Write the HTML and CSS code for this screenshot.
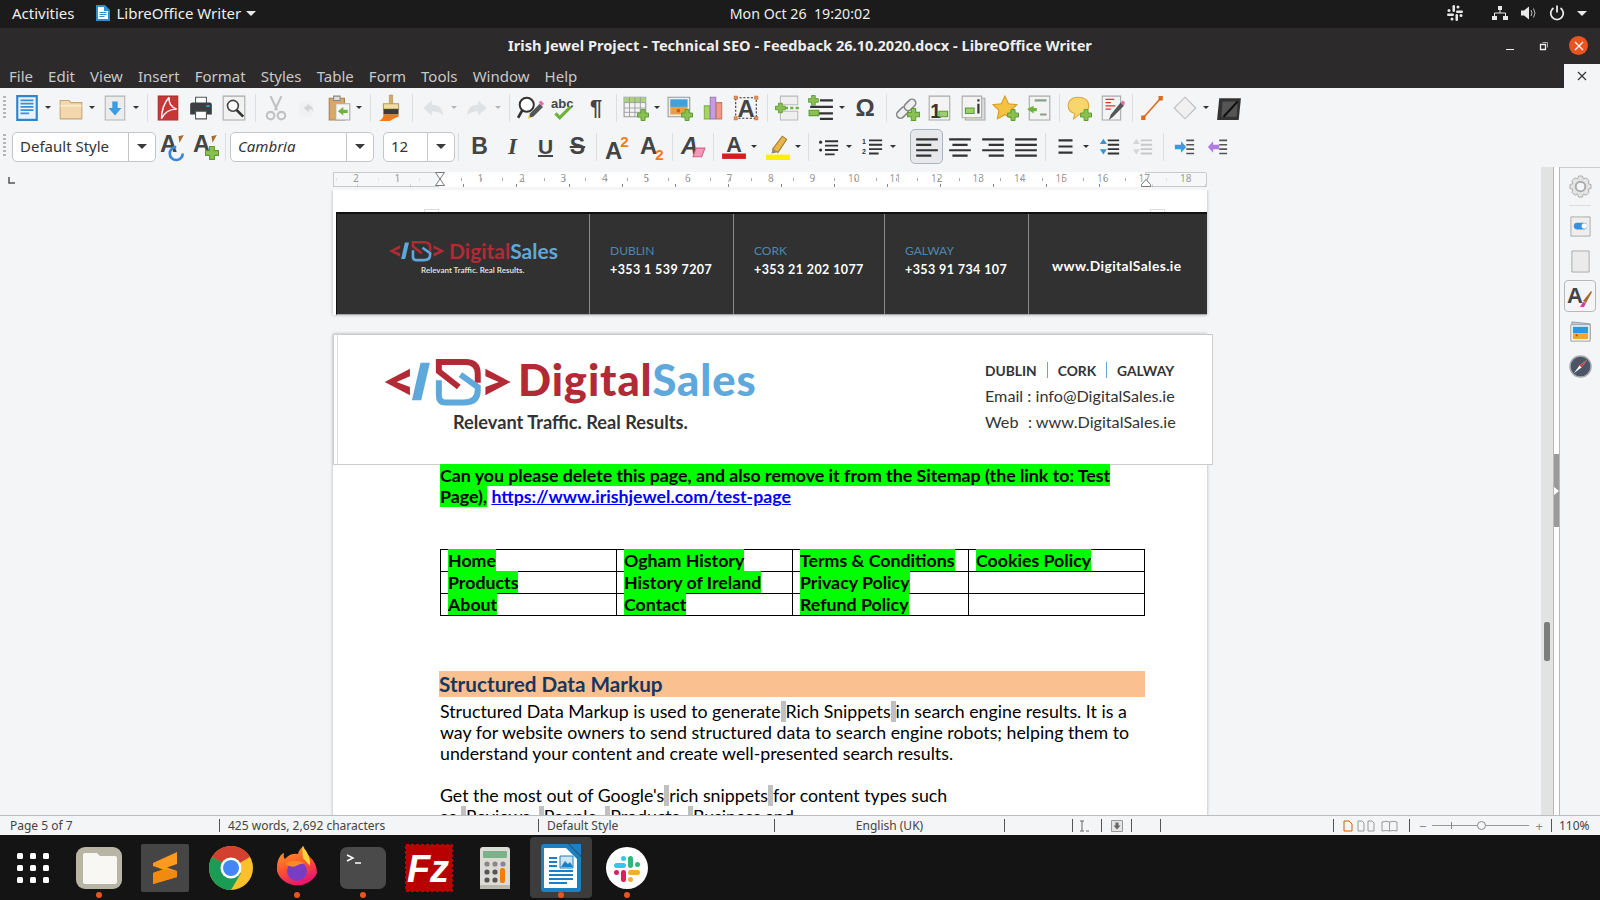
FILE: index.html
```html
<!DOCTYPE html>
<html lang="en">
<head>
<meta charset="utf-8">
<title>LibreOffice Writer</title>
<link rel="stylesheet" href="styles.css">
</head>
<body>
<svg class="defs" width="0" height="0">
  <defs>
    <symbol id="plus" viewBox="0 0 12 12"><path d="M4 .5h4v3.500h3.500v4H8v3.500H4V8H.5V4H4z" fill="#8cc152" stroke="#5d9c37"/></symbol>
    <symbol id="logo" viewBox="40 35 385 150">
      <path d="M118 70 42 110l76 40v-25l-40-15 40-17z" fill="#b22a36"/>
      <path d="M150 52h28l-26 113h-28z" fill="#5fa8dc"/>
      <path d="M265 125 205 78V50h80q37 0 37 35v27" fill="none" stroke="#b22a36" stroke-width="18"/>
      <path d="M205 105v45q0 22 20 22h55q42 0 42-37v-10l-52-37" fill="none" stroke="#5fa8dc" stroke-width="18"/>
      <path d="M345 70l76 40-76 40v-25l40-15-40-17z" fill="#b22a36"/>
    </symbol>
  </defs>
</svg>

<header class="topbar">
  <span class="tb-activities">Activities</span>
  <div class="tb-app">
    <svg class="tb-docicon" viewBox="0 0 14 16" width="14" height="16"><path d="M0 0h9l5 5v11H0z" fill="#2e8fd0"/><path d="M2 2h6v4h4v8H2z" fill="#fff"/><path d="M3.500 7.500h7M3.500 9.500h7M3.500 11.500h5" stroke="#2e8fd0"/></svg>
    <span>LibreOffice Writer</span>
    <i class="tri tri-white"></i>
  </div>
  <time class="tb-clock">Mon Oct 26&nbsp;&nbsp;19:20:02</time>
  <div class="tb-tray">
    <svg class="tray-slack" viewBox="0 0 16 16" width="16" height="16"><g fill="#e8e8e8"><rect x="5.500" y="0" width="2.500" height="7" rx="1.200"/><rect x="8.500" y="9" width="2.500" height="7" rx="1.200"/><rect x="0" y="8.500" width="7" height="2.500" rx="1.200"/><rect x="9" y="5.500" width="7" height="2.500" rx="1.200"/><circle cx="11" cy="2" r="1.500"/><circle cx="5" cy="14" r="1.500"/><circle cx="2" cy="5.500" r="1.500"/><circle cx="14" cy="10.500" r="1.500"/></g></svg>
    <svg class="tray-net" viewBox="0 0 16 14" width="16" height="14"><path d="M6 0h4v4H6zM0 10h5v4H0zM11 10h5v4h-5z" fill="#e8e8e8"/><path d="M8 4v3M2.500 10V7h11v3" stroke="#e8e8e8" fill="none"/></svg>
    <svg class="tray-vol" viewBox="0 0 16 14" width="16" height="14"><path d="M0 4.500h3l5-4v13l-5-4H0z" fill="#e8e8e8"/><path d="M10 4q2 3 0 6M12.500 2.500q3 4.500 0 9" stroke="#bbb" fill="none"/></svg>
    <svg class="tray-pow" viewBox="0 0 16 16" width="16" height="16"><path d="M4.500 3a6.300 6.300 0 1 0 7 0M8 .5v7" stroke="#e8e8e8" stroke-width="1.800" fill="none"/></svg>
    <i class="tri tri-white"></i>
  </div>
</header>

<div class="titlebar">
  <h1 class="title">Irish Jewel Project - Technical SEO - Feedback 26.10.2020.docx - LibreOffice Writer</h1>
  <div class="winbtns">
    <svg viewBox="0 0 10 10" width="10" height="10"><path d="M1 8.500h8" stroke="#eee"/></svg>
    <svg class="win-max" viewBox="0 0 10 10" width="10" height="10"><path d="M1.500 3.500h5v5h-5z" stroke="#eee" fill="none" stroke-width="1.300"/><path d="M3.500 1.500h5v5" stroke="#aaa" fill="none"/></svg>
    <span class="win-close"><svg viewBox="0 0 10 10" width="10" height="10"><path d="M1 1l8 8M9 1l-8 8" stroke="#fff" stroke-width="1.200"/></svg></span>
  </div>
</div>

<nav class="menubar">
  <ul class="menu">
    <li>File</li><li>Edit</li><li>View</li><li>Insert</li><li>Format</li><li>Styles</li><li>Table</li><li>Form</li><li>Tools</li><li>Window</li><li>Help</li>
  </ul>
  <span class="menu-close"><svg viewBox="0 0 10 10" width="10" height="10"><path d="M1 1l8 8M9 1l-8 8" stroke="#333" stroke-width="1.200"/></svg></span>
</nav>

<div class="toolbar tb1">
  <i class="grip"></i>
  <span class="ic"><svg viewBox="0 0 24 24"><path d="M3 1h18v22H3z" fill="#eaf3fb" stroke="#2f86cc" stroke-width="2"/><path d="M6 5h12M6 8h12M6 11h12M6 14h12M6 17h8" stroke="#3a90d4" stroke-width="1.500"/></svg></span><i class="dd"></i>
  <span class="ic"><svg viewBox="0 0 24 24"><path d="M2 5h8l2 2h10v15H2z" fill="#f3d8ad" stroke="#c8a576"/><path d="M2 10h20" stroke="#fff3dd"/></svg></span><i class="dd"></i>
  <span class="ic"><svg viewBox="0 0 24 24"><path d="M3 1h18v22H3z" fill="#ececec" stroke="#b5b5b5"/><path d="M9.500 6h5v6H18l-6 7-6-7h3.500z" fill="#3d9be0"/></svg></span><i class="dd"></i>
  <i class="sep"></i>
  <span class="ic"><svg viewBox="0 0 24 24"><path d="M3 1h18v22H3z" fill="#c93636" stroke="#a92a2a"/><path d="M13 2Q6 10 6 22M13 2q-1 8 7 11Q10 13 6 22" fill="none" stroke="#fff" stroke-width="1.300"/></svg></span>
  <span class="ic"><svg viewBox="0 0 24 24"><path d="M7 2h10v6H7z" fill="#fff" stroke="#555"/><path d="M2 9q0-2 2-2h16q2 0 2 2v9H2z" fill="#3c3f42"/><path d="M7 15h10v7H7z" fill="#fff" stroke="#555"/><path d="M17 9.500h3v1.500h-3z" fill="#2bb0e6"/></svg></span>
  <span class="ic"><svg viewBox="0 0 24 24"><path d="M2 1h20v22H2z" fill="#f2f2f2" stroke="#a9a9a9"/><circle cx="11" cy="10" r="5" fill="#fff" stroke="#444" stroke-width="1.500"/><path d="M14.500 14l6 6" stroke="#333" stroke-width="2.500"/></svg></span>
  <i class="sep"></i>
  <span class="ic"><svg viewBox="0 0 24 24" class="dim"><path d="M7 1l6 13M17 1l-6 13" stroke="#999" stroke-width="2"/><circle cx="7" cy="19" r="3.500" fill="none" stroke="#999" stroke-width="2"/><circle cx="17" cy="19" r="3.500" fill="none" stroke="#999" stroke-width="2"/></svg></span>
  <span class="ic ic-n"><svg viewBox="0 0 24 24" class="dim"><path d="M4 6h12v14H4z" fill="#eee"/><path d="M13 8 8 12l5 4v-3q3 0 4 3 0-6-4-6z" fill="#bbb"/></svg></span>
  <span class="ic ic-n"><svg viewBox="0 0 24 24"><path d="M3 3h14v20H3z" fill="#d9a868" stroke="#a6814e"/><path d="M7 1h6v4H7z" fill="#ddd" stroke="#888"/><path d="M9 8h13v15H9z" fill="#f5f5f5" stroke="#aaa"/><path d="M11 15l5-4v2.500h4v3h-4V19z" fill="#6fb33c"/></svg></span><i class="dd"></i>
  <i class="sep"></i>
  <span class="ic"><svg viewBox="0 0 24 24"><path d="M10.500 0h3v8h-3z" fill="#d9a868" stroke="#a6814e" stroke-width=".5"/><path d="M5 8h14v5H5z" fill="#f1dca9" stroke="#b79a5e"/><path d="M5 13h14v5H5z" fill="#3a3a3a"/><path d="M5 18h14v2q-6 2-8 4H1q4-2 4-6z" fill="#ee7a1e"/></svg></span>
  <i class="sep"></i>
  <span class="ic"><svg viewBox="0 0 24 24" class="dim"><path d="M11 5 3 12l8 7v-4q7 0 10 4 0-10-10-10z" fill="#cfd3d6"/></svg></span><i class="dd dd-dim"></i>
  <span class="ic"><svg viewBox="0 0 24 24" class="dim"><path d="M13 5l8 7-8 7v-4q-7 0-10 4 0-10 10-10z" fill="#cfd3d6"/></svg></span><i class="dd dd-dim"></i>
  <i class="sep"></i>
  <span class="ic"><svg viewBox="0 0 24 24"><circle cx="9" cy="9" r="6.500" fill="#fff" stroke="#333" stroke-width="1.800"/><path d="M5 14 1 21" stroke="#333" stroke-width="2.500"/><path d="M11 21l1-4 9-9 3 3-9 9z" fill="#555"/><path d="M20 7l2-2 3 3-2 2z" fill="#e86aa6"/><path d="M10 22l1-3 2 2z" fill="#f4c430"/></svg></span>
  <span class="ic"><svg viewBox="0 0 24 24"><text x="1" y="12" class="ico-abc">abc</text><path d="M5 17l4 4 10-10" fill="none" stroke="#6fb33c" stroke-width="3"/></svg></span>
  <span class="ic"><span class="glyph pil">¶</span></span>
  <i class="sep sep7"></i>
  <span class="ic"><svg viewBox="0 0 24 24"><path d="M1 2h20v18H1z" fill="#f3f3f3" stroke="#999"/><path d="M1 2h20v5H1z" fill="#a9cf7f"/><path d="M1 7h20M1 12h20M1 16h20M6 2v18M11 2v18M16 2v18" stroke="#999" stroke-width=".8"/><use href="#plus" x="13" y="13" width="11" height="11"/></svg></span><i class="dd"></i>
  <span class="ic"><svg viewBox="0 0 24 24"><path d="M1 2h20v18H1z" fill="#eee" stroke="#999"/><path d="M3 4h16v7H3z" fill="#3ea0dc"/><path d="M3 11h16v7H3z" fill="#e9a23b"/><path d="M9 13h3v3H9z" fill="#d0562f"/><use href="#plus" x="13" y="13" width="11" height="11"/></svg></span>
  <span class="ic"><svg viewBox="0 0 24 24"><path d="M4 10h5v12H4z" fill="#a6d46a" stroke="#84b14c"/><path d="M9.500 2h5v20h-5z" fill="#c79be0" stroke="#9f79bb"/><path d="M15 7h5v15h-5z" fill="#ef9a84" stroke="#c87863"/></svg></span>
  <span class="ic"><svg viewBox="0 0 24 24"><path d="M2.500 2.500h19v19h-19z" fill="none" stroke="#333" stroke-dasharray="2 1.500"/><text x="12" y="20" class="ico-a">A</text><path d="M1 1h3v3H1zM20 1h3v3h-3zM1 20h3v3H1zM20 20h3v3h-3z" fill="#f0935a" stroke="#b7602a" stroke-width=".5"/></svg></span>
  <i class="sep"></i>
  <span class="ic"><svg viewBox="0 0 24 24"><path d="M5 1h16v8H5zM5 15h16v8H5z" fill="#efefef" stroke="#bbb"/><path d="M9 12h3M14 12h3M19 12h3" stroke="#6fb33c" stroke-width="2.500"/><use href="#plus" x="0" y="7" width="10" height="10"/></svg></span>
  <span class="ic"><svg viewBox="0 0 24 24"><path d="M11 5h12M2 11h21M2 17h21M11 22h12" stroke="#333" stroke-width="2"/><use href="#plus" x="0" y="0" width="10" height="10"/><path d="M1 14h9v5H1z" fill="#8cc152" stroke="#5d9c37"/></svg></span><i class="dd"></i>
  <span class="ic"><span class="glyph omega">Ω</span></span>
  <i class="sep"></i>
  <span class="ic"><svg viewBox="0 0 24 24"><g transform="rotate(-45 12 12)" fill="#efefef" stroke="#888" stroke-width="1.500"><rect x="0" y="8.500" width="12" height="7" rx="3.500"/><rect x="10" y="8.500" width="12" height="7" rx="3.500"/></g><use href="#plus" x="12" y="12" width="12" height="12"/></svg></span>
  <span class="ic"><svg viewBox="0 0 24 24"><path d="M2 1h19v22H2z" fill="#f3f3f3" stroke="#aaa"/><text x="3" y="21" class="ico-one">1</text><path d="M11 15h8v5h-8z" fill="#9ccf6a" stroke="#5d9c37"/></svg></span>
  <span class="ic"><svg viewBox="0 0 24 24"><path d="M5 3h18v20H5z" fill="#ddd" stroke="#aaa"/><path d="M2 1h18v20H2z" fill="#f3f3f3" stroke="#aaa"/><path d="M5 12h8v5H5z" fill="#9ccf6a" stroke="#5d9c37"/><path d="M16 4h2v2h-2zM16 8h2v9h-2z" fill="#333"/></svg></span>
  <span class="ic"><svg viewBox="0 0 24 24"><path d="M11 1l3.300 7 7.700 1-5.600 5.200L18 22l-7-3.800L4 22l1.500-7.800L0 9l7.700-1z" fill="#f5c33f" stroke="#d69c25"/><use href="#plus" x="13" y="13" width="11" height="11"/></svg></span>
  <span class="ic"><svg viewBox="0 0 24 24"><path d="M3 1h19v22H3z" fill="#f3f3f3" stroke="#aaa"/><path d="M8 4h11v2H8zM13 17h6v2h-6z" fill="#8aa08a"/><path d="M1 13l6-3v2h3v3H7v2z" fill="#6fb33c"/></svg></span>
  <i class="sep sep7"></i>
  <span class="ic"><svg viewBox="0 0 24 24"><path d="M11 2c6 0 10 3 10 8s-4 8-9 8l-5 4 1-5c-4-1-6-4-6-7 0-5 4-8 9-8z" fill="#f9d66b" stroke="#e0a93a"/><use href="#plus" x="13" y="13" width="11" height="11"/></svg></span>
  <span class="ic"><svg viewBox="0 0 24 24"><path d="M3 1h17v22H3z" fill="#f3f3f3" stroke="#aaa"/><path d="M6 4h8M6 7h5M6 10h9M6 13h5" stroke="#d33" stroke-width="1.300"/><path d="M9 23l2-5 9-11 3 3-10 10z" fill="#555"/><path d="M20 7l2-2 2 2-1 3z" fill="#e86aa6"/></svg></span>
  <i class="sep sep7"></i>
  <span class="ic"><svg viewBox="0 0 24 24"><path d="M4 21 20 3" stroke="#dd6b1e" stroke-width="1.500"/><path d="M2 19h4v4H2zM18 1h4v4h-4z" fill="#dd6b1e"/></svg></span>
  <span class="ic"><svg viewBox="0 0 24 24"><path d="M12 2l10 10-10 10L2 12z" fill="#f0f0f0" stroke="#bdbdbd"/></svg></span><i class="dd"></i>
  <span class="ic"><svg viewBox="0 0 24 24"><path d="M3 3h20l-2 20H1z" fill="#333"/><path d="M6 6h14l-1 14H5z" fill="#555"/><path d="M7 20 20 6" stroke="#111" stroke-width="2"/></svg></span>
</div>

<div class="toolbar tb2">
  <i class="grip"></i>
  <div class="combo combo-style"><span class="combo-text">Default Style</span><span class="combo-btn"><i class="tri tri-dark"></i></span></div>
  <span class="ic"><svg viewBox="0 0 24 24"><text x="0" y="17" class="ico-bigA">A</text><path d="M15 12a6 6 0 1 0 6 6" fill="none" stroke="#3a86d8" stroke-width="2.500"/><path d="M17 2l5-1-4 7z" fill="#a96a2a"/></svg></span>
  <span class="ic"><svg viewBox="0 0 24 24"><text x="0" y="17" class="ico-bigA">A</text><use href="#plus" x="11" y="11" width="13" height="13"/><path d="M17 2l5-1-4 7z" fill="#a96a2a"/></svg></span>
  <i class="sep sep8"></i>
  <div class="combo combo-font"><span class="combo-text italic">Cambria</span><span class="combo-btn"><i class="tri tri-dark"></i></span></div>
  <div class="combo combo-size"><span class="combo-text">12</span><span class="combo-btn"><i class="tri tri-dark"></i></span></div>
  <i class="sep sep8"></i>
  <span class="ic"><span class="glyph fmt fmt-b">B</span></span>
  <span class="ic"><span class="glyph fmt fmt-i">I</span></span>
  <span class="ic"><span class="glyph fmt fmt-u">U</span></span>
  <span class="ic ic-n"><span class="glyph fmt fmt-s">S</span></span>
  <i class="sep sep7"></i>
  <span class="ic ic-w"><svg viewBox="0 0 24 24"><text x="0" y="23" class="ico-bigA">A</text><text x="14" y="12" class="ico-sup">2</text></svg></span>
  <span class="ic"><svg viewBox="0 0 24 24"><text x="0" y="18" class="ico-bigA">A</text><text x="14" y="24" class="ico-sup">2</text></svg></span>
  <i class="sep sep7"></i>
  <span class="ic ic-w2"><svg viewBox="0 0 24 24"><text x="1" y="18" class="ico-bigA italic">A</text><path d="M12 21l3-8h8l-3 8z" fill="#f49ab8" stroke="#d5608a"/></svg></span>
  <i class="sep sep7"></i>
  <span class="ic"><svg viewBox="0 0 24 24"><text x="12" y="17" class="ico-a ico-a2">A</text><path d="M1 18h22v5H1z" fill="#cf1f1f"/></svg></span><i class="dd"></i>
  <span class="ic"><svg viewBox="0 0 24 24"><path d="M7 14 16 2l4 3-8 12z" fill="#e8b64a" stroke="#a57f29"/><path d="M7 14l4 3-5 1z" fill="#888"/><path d="M1 19h22v5H1z" fill="#ffee00"/></svg></span><i class="dd"></i>
  <i class="sep sep7"></i>
  <span class="ic ic-sm"><svg viewBox="0 0 24 24"><path d="M8 6h15M8 11h15M8 16h15M8 21h11" stroke="#333" stroke-width="2.200"/><circle cx="3" cy="7" r="1.800" fill="#333"/><circle cx="3" cy="16" r="1.800" fill="#333"/></svg></span><i class="dd"></i>
  <span class="ic ic-sm"><svg viewBox="0 0 24 24"><path d="M8 5h15M8 10h15M8 15h15M8 20h11" stroke="#333" stroke-width="2.200"/><text x="0" y="9" class="ico-num">1</text><text x="0" y="20" class="ico-num">2</text></svg></span><i class="dd"></i>
  <i class="sep sep-a"></i>
  <span class="ic ic-act"><svg viewBox="0 0 24 24"><path d="M2 5h20M2 10h14M2 15h20M2 20h14" stroke="#333" stroke-width="2"/></svg></span>
  <span class="ic"><svg viewBox="0 0 24 24"><path d="M2 5h20M5 10h14M2 15h20M5 20h14" stroke="#333" stroke-width="2"/></svg></span>
  <span class="ic"><svg viewBox="0 0 24 24"><path d="M2 5h20M8 10h14M2 15h20M8 20h14" stroke="#333" stroke-width="2"/></svg></span>
  <span class="ic"><svg viewBox="0 0 24 24"><path d="M2 5h20M2 10h20M2 15h20M2 20h20" stroke="#333" stroke-width="2"/></svg></span>
  <i class="sep sep7"></i>
  <span class="ic ic-sm"><svg viewBox="0 0 24 24"><path d="M4 5h16M4 12h16M4 19h16" stroke="#333" stroke-width="2.500"/></svg></span><i class="dd"></i>
  <span class="ic ic-sm"><svg viewBox="0 0 24 24"><path d="M10 5h13M10 10h13M10 15h13M10 20h13" stroke="#333" stroke-width="2.200"/><path d="M5 3l4 6H1zM1 15h8l-4 6z" fill="#3a90d4"/></svg></span>
  <span class="ic ic-sm"><svg viewBox="0 0 24 24"><path d="M10 5h13M10 10h13M10 15h13M10 20h13" stroke="#c8c8c8" stroke-width="2.200"/><path d="M5 3l4 6H1zM1 15h8l-4 6z" fill="#d6d6d6"/></svg></span>
  <i class="sep"></i>
  <span class="ic ic-sm"><svg viewBox="0 0 24 24"><path d="M14 5h9M14 10h9M14 15h9M14 20h9" stroke="#555" stroke-width="1.800"/><path d="M8 6l6 6.500L8 19v-4H1v-5h7z" fill="#3a9be0"/></svg></span>
  <span class="ic ic-sm"><svg viewBox="0 0 24 24"><path d="M14 5h9M14 10h9M14 15h9M14 20h9" stroke="#555" stroke-width="1.800"/><path d="M7 6l-6 6.500L7 19v-4h7v-5H7z" fill="#b07be0"/></svg></span>
</div>

<main class="workspace">
  <div class="docpane">
    <div class="rulerrow">
      <svg class="tabmark" viewBox="0 0 7 7" width="7" height="7"><path d="M1 0v6h6" fill="none" stroke="#555" stroke-width="1.500"/></svg>
      <div class="ruler">
        <span class="r-grey r-grey-l"></span>
        <span class="r-grey r-grey-r"></span>
        <div class="r-nums">
          <span>2</span><span>1</span><span></span><span>1</span><span>2</span><span>3</span><span>4</span><span>5</span><span>6</span><span>7</span><span>8</span><span>9</span><span>10</span><span>11</span><span>12</span><span>13</span><span>14</span><span>15</span><span>16</span><span>17</span><span>18</span>
        </div>
        <svg class="r-indent r-indent-l" viewBox="0 0 10 14" width="10" height="14"><path d="M.5.500h9L5 7l4.500 6.500h-9L5 7z" fill="#fff" stroke="#777"/></svg>
        <svg class="r-indent r-indent-r" viewBox="0 0 10 8" width="10" height="8"><path d="M5 .5l4.500 5v2h-9v-2z" fill="#fff" stroke="#777"/></svg>
      </div>
    </div>
    <div class="docview">
      <div class="page page-prev">
        <div class="cropmarks"><i></i><i></i></div>
        <div class="band">
          <div class="band-cell band-brand">
            <div class="band-logo"><svg class="band-mark" viewBox="0 0 385 150"><use href="#logo"/></svg><span class="band-word"><b class="w-red">Digital</b><b class="w-blue">Sales</b></span></div>
            <div class="band-tag">Relevant Traffic. Real Results.</div>
          </div>
          <div class="band-cell band-city c1"><span class="city">DUBLIN</span><strong>+353 1 539 7207</strong></div>
          <div class="band-cell band-city c2"><span class="city">CORK</span><strong>+353 21 202 1077</strong></div>
          <div class="band-cell band-city c3"><span class="city">GALWAY</span><strong>+353 91 734 107</strong></div>
          <div class="band-cell band-web"><strong>www.DigitalSales.ie</strong></div>
        </div>
      </div>
      <div class="page page-cur">
        <div class="headbox">
          <div class="hb-left">
            <div class="hb-logo"><svg class="hb-mark" viewBox="0 0 385 150"><use href="#logo"/></svg><span class="hb-word"><b class="w-red">Digital</b><b class="w-blue">Sales</b></span></div>
            <div class="hb-tag">Relevant Traffic. Real Results.</div>
          </div>
          <div class="hb-right">
            <div class="hb-cities"><b>DUBLIN</b><i></i><b>CORK</b><i></i><b>GALWAY</b></div>
            <div class="hb-line">Email : info@DigitalSales.ie</div>
            <div class="hb-line"><span class="hb-lab">Web</span>: www.DigitalSales.ie</div>
          </div>
        </div>
        <div class="body">
          <p class="note"><mark>Can you please delete this page, and also remove it from the Sitemap (the link to: Test Page),</mark> <a href="#">https://www.irishjewel.com/test-page</a></p>
          <table class="links">
            <tr><td><mark>Home</mark></td><td><mark>Ogham History</mark></td><td><mark>Terms &amp; Conditions</mark></td><td><mark>Cookies Policy</mark></td></tr>
            <tr><td><mark>Products</mark></td><td><mark>History of Ireland</mark></td><td><mark>Privacy Policy</mark></td><td></td></tr>
            <tr><td><mark>About</mark></td><td><mark>Contact</mark></td><td><mark>Refund Policy</mark></td><td></td></tr>
          </table>
          <h2 class="sect">Structured Data Markup</h2>
          <p class="para">Structured Data Markup is used to generate<i class="fld"></i>Rich Snippets<i class="fld"></i>in search engine results. It is a way for website owners to send structured data to search engine robots; helping them to understand your content and create well-presented search results.</p>
          <p class="para para-2">Get the most out of Google's<i class="fld"></i>rich snippets<i class="fld"></i>for content types such<br>as <i class="fld"></i>Reviews, <i class="fld"></i>People, <i class="fld"></i>Products, <i class="fld"></i>Business and</p>
        </div>
      </div>
    </div>
  </div>
  <div class="vscroll"><span class="thumb"></span></div>
  <div class="sash"><span class="sash-handle"><i></i></span></div>
  <aside class="sidebar">
    <span class="sb-ic"><svg viewBox="0 0 24 24"><path d="M10 0h4l1 3 3-1 3 3-1 3 3 1v4l-3 1 1 3-3 3-3-1-1 3h-4l-1-3-3 1-3-3 1-3-3-1V9l3-1-1-3 3-3 3 1z" fill="#e4e4e4" stroke="#aaa"/><circle cx="12" cy="11" r="5" fill="#f4f5f7" stroke="#aaa" stroke-width="2"/></svg></span>
    <i class="sb-div"></i>
    <span class="sb-ic"><svg viewBox="0 0 24 24"><path d="M2 2h20v20H2z" fill="#eee" stroke="#aaa"/><rect x="5" y="8" width="14" height="7" rx="3.500" fill="#3a90e0"/><circle cx="16" cy="11.500" r="2.800" fill="#fff"/></svg></span>
    <span class="sb-ic"><svg viewBox="0 0 24 24"><path d="M3 1h18v22H3z" fill="#ebebeb" stroke="#aaa"/></svg></span>
    <span class="sb-ic sb-act"><svg viewBox="0 0 24 24"><text x="-1" y="19" class="ico-bigA">A</text><path d="M15 17 23 7l1 1-6 11z" fill="#a96a2a"/><path d="M12 23l3-5 3 1-2 4z" fill="#d63ca6"/></svg></span>
    <span class="sb-ic"><svg viewBox="0 0 24 24"><path d="M3 2l19 2v16L3 21z" fill="#bcd" stroke="#99a"/><path d="M2 5h20v17H2z" fill="#fff" stroke="#999"/><path d="M4 7h16v7H4z" fill="#2e97dd"/><path d="M4 14h16v6H4z" fill="#eda739"/><path d="M7 15h2v2H7z" fill="#d0402a"/></svg></span>
    <span class="sb-ic"><svg viewBox="0 0 24 24"><circle cx="12" cy="12" r="11" fill="#4a5568" stroke="#aaa" stroke-width="1.500"/><path d="M19 5 13 13 5 19l6-8z" fill="#fff"/><path d="M19 5l-6 8-2-2z" fill="#d33"/></svg></span>
  </aside>
</main>

<footer class="statusbar">
  <span class="st st-page">Page 5 of 7</span>
  <span class="st st-words">425 words, 2,692 characters</span>
  <span class="st st-style">Default Style</span>
  <span class="st st-lang">English (UK)</span>
  <span class="st st-a"></span>
  <span class="st st-ins"><svg viewBox="0 0 12 12" width="12" height="12"><path d="M2 1h4M4 1v10M2 11h4M8 11h3" stroke="#666" fill="none"/></svg></span>
  <span class="st st-save"><svg viewBox="0 0 12 12" width="12" height="12"><path d="M.5.500h11v11H.5z" fill="#e4e4e4" stroke="#999"/><path d="M4.500 2.500h3v3h2l-3.500 4-3.500-4h2z" fill="#666"/></svg></span>
  <span class="st st-b"></span>
  <span class="st st-c"></span>
  <span class="st st-views">
    <svg viewBox="0 0 10 12" width="10" height="12"><path d="M1 1h5l3 3v7H1z" fill="none" stroke="#d65c00"/></svg>
    <svg viewBox="0 0 20 12" width="20" height="12"><path d="M1 1h4l2 2v8H1zM11 1h4l2 2v8h-6z" fill="none" stroke="#999"/></svg>
    <svg viewBox="0 0 17 12" width="17" height="12"><path d="M8.500 2Q5 .5 1 2v9q4-1 7.500 0 3.500-1 7.500 0V2Q12 .5 8.500 2v9" fill="none" stroke="#999"/></svg>
  </span>
  <span class="st st-zoom">
    <i class="z-sign">−</i>
    <span class="z-track"><i class="z-mid"></i><i class="z-knob"></i></span>
    <i class="z-sign">+</i>
  </span>
  <span class="st st-pct">110%</span>
</footer>

<nav class="dock">
  <span class="d-app d-grid"><svg viewBox="0 0 32 30" width="32" height="30"><g fill="#fff"><rect x="0" y="0" width="6" height="6" rx="1.500"/><rect x="13" y="0" width="6" height="6" rx="1.500"/><rect x="26" y="0" width="6" height="6" rx="1.500"/><rect x="0" y="12" width="6" height="6" rx="1.500"/><rect x="13" y="12" width="6" height="6" rx="1.500"/><rect x="26" y="12" width="6" height="6" rx="1.500"/><rect x="0" y="24" width="6" height="6" rx="1.500"/><rect x="13" y="24" width="6" height="6" rx="1.500"/><rect x="26" y="24" width="6" height="6" rx="1.500"/></g></svg></span>
  <span class="d-app on"><svg viewBox="0 0 46 42" width="46" height="42"><rect width="46" height="42" rx="9" fill="#b9b5a4"/><path d="M7 8q0-2 2-2h12l3 3h15q2 0 2 2v24q0 2-2 2H9q-2 0-2-2z" fill="#f8f7f4"/></svg></span>
  <span class="d-app"><svg viewBox="0 0 48 48" width="48" height="48"><rect width="48" height="48" rx="2" fill="#454545"/><path d="M36 8V20L26 23.500 36 27V33L12 40V29L22 25.500 12 22V19z" fill="#ff9a1f"/><path d="M12 29l10-3.500 14 1.500v6L12 40z" fill="#f28a10"/></svg></span>
  <span class="d-app"><svg viewBox="0 0 44 44" width="44" height="44"><circle cx="22" cy="22" r="22" fill="#fbc02d"/><path d="M22 22 3 11A22 22 0 0 1 41 11z" fill="#d3402f"/><path d="M3 11A22 22 0 0 0 22 44L32 27z" fill="#1b9c55"/><circle cx="22" cy="22" r="10.500" fill="#fff"/><circle cx="22" cy="22" r="8" fill="#4287f5"/></svg></span>
  <span class="d-app on"><svg viewBox="0 0 44 44" width="44" height="44"><defs><linearGradient id="ff" x1="0" y1="0" x2=".4" y2="1"><stop offset="0" stop-color="#ffb02a"/><stop offset=".55" stop-color="#ff5a2a"/><stop offset="1" stop-color="#e8196a"/></linearGradient></defs><path d="M2 22C2 13 6 8 9 7q-1 4 1 6 5-6 13-5 1-5 6-8 0 6 5 10 8 7 8 17A21 19 0 0 1 2 25z" fill="url(#ff)"/><path d="M27 0q9 9 8 20l-7-8z" fill="#ffd23a"/><circle cx="22" cy="25" r="10" fill="#7a3cc4"/><path d="M10 18q8-6 20-1-6 1-9 3-4 2-11-2z" fill="#ff8a1f"/></svg></span>
  <span class="d-app on"><svg viewBox="0 0 46 42" width="46" height="42"><rect width="46" height="42" rx="7" fill="#4a4a4a"/><path d="M7 8l6 3-6 3" fill="none" stroke="#fff" stroke-width="1.500"/><path d="M15 16h6" stroke="#fff" stroke-width="1.500"/></svg></span>
  <span class="d-app"><svg viewBox="0 0 48 48" width="48" height="48"><rect x="1" y="1" width="46" height="46" fill="#b80000" stroke="#b80000" stroke-width="2" stroke-dasharray="3 2"/><rect x="4" y="4" width="40" height="40" fill="#b80000"/><text x="23" y="38" class="fz">Fz</text></svg></span>
  <span class="d-app"><svg viewBox="0 0 30 42" width="30" height="42"><rect width="30" height="42" rx="3" fill="#dcdcd4"/><rect y="38" width="30" height="4" fill="#b8b8b0"/><rect x="3" y="4" width="24" height="7" rx="1" fill="#7cb28b"/><g fill="#888"><circle cx="7" cy="17" r="2.600"/><circle cx="15" cy="17" r="2.600"/><circle cx="23" cy="17" r="2.600"/></g><g fill="#555"><circle cx="7" cy="25" r="2.600"/><circle cx="15" cy="25" r="2.600"/><circle cx="7" cy="33" r="2.600"/><circle cx="15" cy="33" r="2.600"/></g><rect x="20" y="21" width="5" height="15" rx="2" fill="#f57c00"/></svg></span>
  <span class="d-app d-active on"><svg viewBox="0 0 40 48" width="40" height="48"><path d="M0 3q0-3 3-3h24l13 13v32q0 3-3 3H3q-3 0-3-3z" fill="#1b80c4"/><path d="M3 4h22l11 11v29H3z" fill="#fff"/><path d="M28 0h12v12z" fill="#1b80c4"/><path d="M8 14h8M8 18h8M8 22h8M8 27h24M8 31h24M8 35h24M8 39h18" stroke="#1b80c4" stroke-width="1.800"/><path d="M19 12h13v12H19z" fill="#cfe5f4" stroke="#1b80c4"/><path d="M20 23l4-6 3 3 2-2 3 5z" fill="#1b80c4"/></svg></span>
  <span class="d-app on"><svg viewBox="0 0 42 42" width="42" height="42"><circle cx="21" cy="21" r="21" fill="#fff"/><rect x="22" y="9" width="5" height="12" rx="2.500" fill="#2eb67d"/><rect x="29" y="15" width="5" height="5" rx="2.500" fill="#2eb67d"/><rect x="8" y="16" width="12" height="5" rx="2.500" fill="#36c5f0"/><rect x="15" y="9" width="5" height="5" rx="2.500" fill="#36c5f0"/><rect x="15" y="23" width="5" height="12" rx="2.500" fill="#e01e5a"/><rect x="8" y="23" width="5" height="5" rx="2.500" fill="#e01e5a"/><rect x="22" y="23" width="12" height="5" rx="2.500" fill="#ecb22e"/><rect x="22" y="30" width="5" height="5" rx="2.500" fill="#ecb22e"/></svg></span>
</nav>
</body>
</html>
```

FILE: styles.css
```css
* { box-sizing: border-box; }
html, body { margin: 0; padding: 0; }
body {
  width: 1600px; height: 900px; overflow: hidden;
  display: flex; flex-direction: column;
  font-family: "Noto Sans", sans-serif; color: #333; background: #f4f5f7;
}
.defs { position: absolute; }
i { font-style: normal; display: block; }

/* GNOME top bar */
.topbar {
  height: 28px; flex: none; background: #1b1b1b; color: #eee;
  display: flex; align-items: center; font-size: 15px; position: relative; padding-bottom: 2px;
}
.tb-activities { margin-left: 12px; }
.tb-app { display: flex; align-items: center; margin-left: 21px; }
.tb-docicon { margin-right: 7px; }
.tb-app .tri { margin-left: 5px; }
.tb-clock { position: absolute; left: 0; right: 0; text-align: center; font-size: 14.200px; }
.tb-tray { margin-left: auto; display: flex; align-items: center; }
.tray-slack { margin-right: 29px; }
.tray-net { margin-right: 13px; }
.tray-vol { margin-right: 12px; }
.tray-pow { margin-right: 12px; }
.tb-tray .tri { margin-right: 13px; }

.tri { width: 0; height: 0; border-style: solid; border-width: 5px 5px 0; border-color: transparent; flex: none; }
.tri-white { border-top-color: #e8e8e8; border-width: 5px 5px 0; }
.tri-dark { border-top-color: #3a3a3a; }

/* Window title */
.titlebar {
  height: 36px; flex: none; background: #2c2a2b; position: relative; padding-bottom: 2px;
  display: flex; align-items: center; justify-content: center;
}
.title { margin: 0; font-size: 14.600px; font-weight: 700; color: #eee; }
.winbtns { position: absolute; right: 12px; top: 8px; display: flex; align-items: center; }
.winbtns svg { flex: none; }
.win-max { margin-left: 24px; margin-right: 20px; }
.win-close { width: 19px; height: 19px; border-radius: 50%; background: #e9541f; display: flex; align-items: center; justify-content: center; }

/* Menu */
.menubar { height: 24px; flex: none; background: #2c2a2b; display: flex; align-items: center; justify-content: space-between; }
.menu { list-style: none; margin: 0 0 0 9px; padding: 0; display: flex; gap: 15.100px; font-size: 15px; color: #c8c8c8; }
.menu-close { width: 36px; height: 24px; background: #f4f5f7; display: flex; align-items: center; justify-content: center; }

/* Toolbars */
.toolbar { display: flex; align-items: center; flex: none; background: #f4f5f7; position: relative; }
.tb1 { height: 38px; padding: 2px 0 0 10.500px; }
.tb2 { height: 41px; padding-left: 12px; }
.grip {
  position: absolute; left: 3px; top: 8px; width: 3px; height: 24px;
  background: repeating-linear-gradient(#b5b5b5 0 2px, transparent 2px 4px);
}
.ic { width: 33px; height: 30px; flex: none; display: flex; align-items: center; justify-content: center; }
.ic-n { width: 31px; }
.ic-w { width: 36px; }
.ic-w2 { width: 34px; }
.ic svg { width: 26px; height: 26px; overflow: visible; }
.ic-sm svg { width: 21px; height: 21px; }
.dim { opacity: .55; }
.dd { width: 11px; height: 10px; flex: none; position: relative; }
.dd::after { content: ""; position: absolute; left: 1px; top: 3px; border: solid transparent; border-width: 3px 3px 0; border-top-color: #333; }
.dd-dim::after { border-top-color: #b5b5b5; }
.sep { width: 9px; height: 28px; flex: none; position: relative; }
.sep::after { content: ""; position: absolute; left: 4px; top: 0; width: 1px; height: 100%; background: #dcdee0; }
.sep7 { width: 7px; }
.sep7::after { left: 3px; }
.sep8 { width: 8px; }
.sep8::after { left: 3px; }
.sep-a { width: 10px; }
.sep-a::after { display: none; }
.ic-act { border: 1px solid #aab4c2; border-radius: 5px; background: #e6e8eb; height: 35px; }

.glyph { font-family: "Liberation Sans", sans-serif; font-weight: 700; color: #444; line-height: 1; }
.pil { font-size: 22px; }
.omega { font-size: 24px; }
.fmt { font-size: 23px; }
.fmt-i { font-style: italic; font-family: "Liberation Serif", serif; }
.fmt-u { text-decoration: underline; text-decoration-thickness: 2px; font-size: 21px; }
.fmt-s { text-decoration: line-through; text-decoration-thickness: 2px; }

svg text { font-family: "Liberation Sans", sans-serif; font-weight: 700; }
.ico-abc { font-size: 12px; fill: #444; }
.ico-a { font-size: 22px; fill: #444; text-anchor: middle; }
.ico-a2 { font-size: 20px; }
.ico-one { font-size: 18px; fill: #333; }
.ico-bigA { font-size: 22px; fill: #444; }
.ico-sup { font-size: 14px; fill: #ef7d14; }
.ico-num { font-size: 8px; fill: #333; }
.italic { font-style: italic; }

.combo {
  height: 30px; flex: none; background: #fff; border: 1px solid #c4c6c9; border-radius: 5px;
  display: flex; align-items: center; font-size: 15px; color: #333;
}
.combo-text { flex: 1; padding: 0 0 2px 7px; }
.combo-btn { height: 100%; border-left: 1px solid #c4c6c9; display: flex; align-items: center; justify-content: center; }
.combo-style { width: 144px; }
.combo-style .combo-btn { width: 27px; }
.combo-font { width: 144px; }
.combo-font .combo-btn { width: 27px; }
.combo-size { width: 72px; margin-left: 9px; }
.combo-size .combo-btn { width: 27px; }

/* Workspace */
.workspace { height: 648px; flex: none; display: flex; }
.docpane { width: 1541px; flex: none; display: flex; flex-direction: column; }
.rulerrow { height: 23px; flex: none; padding-top: 5px; padding-left: 333px; position: relative; }
.tabmark { position: absolute; left: 8px; top: 10px; }
.ruler {
  width: 874px; height: 15px; background: #fff; position: relative; overflow: hidden;
  background-image:
    repeating-linear-gradient(90deg, #aaa 0 1px, transparent 1px 20.750px),
    repeating-linear-gradient(90deg, #888 0 1px, transparent 1px 53px);
  background-size: 100% 3px, 100% 3px;
  background-position: 3px 6px, 24px 12px;
  background-repeat: no-repeat;
}
.r-grey { position: absolute; top: 0; height: 15px; border: 1px solid #b9b9b9; background: #f4f5f7; opacity: .75; }
.r-grey-l { left: 0; width: 106px; border-right: 0; }
.r-grey-r { right: 0; width: 62px; border-left: 0; border-radius: 0 2px 2px 0; }
.r-nums { position: absolute; left: 2px; top: 0; display: flex; font-size: 10px; color: #9a9a9a; line-height: 13px; font-family: "Noto Sans", sans-serif; }
.r-nums span { width: 41.500px; text-align: center; flex: none; }
.r-indent { position: absolute; }
.r-indent-l { left: 102px; top: 0; }
.r-indent-r { left: 808px; top: 7px; }

.docview { flex: 1; min-height: 0; overflow: hidden; padding-left: 333px; }
.page { background: #fff; width: 874px; box-shadow: 0 0 3px rgba(0,0,0,.3); }
.page-prev { height: 125px; padding-top: 19px; padding-left: 3px; }
.page-cur { margin-top: 19px; }
.cropmarks { height: 3px; display: flex; justify-content: space-between; padding: 0 42px 0 88px; }
.cropmarks i { width: 15px; height: 3px; border: 1px solid #ddd; border-bottom: 0; }
.band { height: 103px; background: #313131; border-top: 2px solid #111; border-left: 1px solid #111; display: flex; color: #fff; border-bottom: 1px solid #aaa; }
.band-cell { height: 100%; border-right: 1px solid #8a8a8a; flex: none; }
.band-brand { width: 253px; padding: 26px 0 0 51px; }
.band-logo { display: flex; align-items: center; }
.band-mark { width: 58px; height: 22px; flex: none; }
.band-word { font-family: "Lato", sans-serif; font-size: 21px; margin-left: 3px; line-height: 22px; }
.w-red { color: #b22a36; }
.w-blue { color: #5fa8dc; }
.band-tag { font-size: 8px; font-weight: 700; margin: 3px 0 0 33px; color: #ddd; font-family: "Lato", sans-serif; }
.band-city { padding: 29px 0 0 20px; font-family: "Lato", sans-serif; display: flex; flex-direction: column; }
.c1 { width: 144px; } .c2 { width: 151px; } .c3 { width: 144px; }
.city { font-size: 12px; color: #4f87ad; line-height: 16px; }
.band-city strong { font-size: 12.500px; letter-spacing: .4px; line-height: 20px; margin-top: 1px; }
.band-web strong { font-size: 13.800px; letter-spacing: .4px; line-height: 20px; }
.band-web { border: 0; padding: 41px 0 0 23px; font-family: "Lato", sans-serif; }

.headbox {
  height: 131px; width: 880px; border: 1px solid #ccc; padding: 22px 36px 0 50px;
  display: flex; justify-content: space-between; background: #fff; font-family: "Lato", sans-serif;
  box-shadow: inset 3px 0 0 #fff, inset 4px 0 0 #ddd;
}
.hb-logo { display: flex; align-items: center; height: 50px; }
.hb-mark { width: 128px; height: 50px; flex: none; }
.hb-word { font-size: 43.500px; margin: -6px 0 0 6px; font-weight: 700; letter-spacing: .9px; }
.hb-tag { font-size: 18.200px; font-weight: 700; margin: 4px 0 0 69px; color: #333; }
.hb-right { width: 190px; padding-top: 3px; margin-right: 1px; color: #333; }
.hb-cities { display: flex; align-items: center; font-size: 13.800px; height: 20px; margin-bottom: 3px; }
.hb-cities i { width: 1px; height: 16px; background: #5fa8dc; margin: 0 10px; flex: none; }
.hb-line { font-size: 16.200px; line-height: 26px; white-space: nowrap; }
.hb-lab { display: inline-block; width: 43px; }

.body { padding: 0 62px 0 107px; font-family: "Lato", sans-serif; font-size: 17.750px; line-height: 21px; color: #000; height: 400px; }
.body p { margin: 0; }
mark { background: #0f0; color: #000; }
.note { font-weight: 700; width: 690px; }
.note a { color: #00f; }
.links { border-collapse: collapse; width: 705px; margin-top: 42px; table-layout: fixed; font-weight: 700; }
.links td { border: 1px solid #000; padding: 0 0 0 7px; height: 22px; line-height: 21px; white-space: nowrap; }
.sect { margin: 55px 0 0 -1px; font-size: 20.700px; line-height: 26px; height: 26px; background: #fac090; color: #17365d; font-weight: 700; width: 706px; }
.para { margin-top: 4px !important; width: 706px; }
.para-2 { margin-top: 21px !important; }
.fld { display: inline-block; width: 5px; height: 21px; background: #c0c0c0; vertical-align: top; }

/* right gutter */
.vscroll { width: 12px; flex: none; background: #e1e3e2; position: relative; }
.thumb { position: absolute; left: 3px; top: 455px; width: 6px; height: 39px; background: #7c7e7e; border-radius: 2px; }
.sash { width: 7px; flex: none; border-left: 1px solid #b9b9b9; border-right: 1px solid #b9b9b9; background: #fff; position: relative; }
.sash-handle { position: absolute; left: 0; right: 0; top: 287px; height: 73px; background: #9a9a9a; display: flex; align-items: center; }
.sash-handle i { border: solid transparent; border-width: 4px 0 4px 5px; border-left-color: #fff; margin-left: 0; }
.sidebar { width: 40px; flex: none; display: flex; flex-direction: column; align-items: center; padding-top: 3px; border-top: 1px solid #ccc; }
.sb-ic { width: 32px; height: 32px; display: flex; align-items: center; justify-content: center; margin-bottom: 3px; }
.sb-ic svg { width: 23px; height: 23px; overflow: visible; }
.sb-act { border: 1px solid #b9b9b9; border-radius: 4px; }
.sb-act svg { width: 24px; height: 24px; }
.sb-div { width: 22px; height: 1px; background: #ddd; margin: -1px 0 4px; }

/* Status bar */
.statusbar {
  height: 20px; flex: none; display: flex; align-items: center; font-size: 12px; color: #444;
  border-top: 1px solid #bdbdbd; background: #f4f5f7; position: relative; z-index: 1;
}
.st { height: 13px; display: flex; align-items: center; border-right: 1px solid #555; flex: none; white-space: nowrap; }
.st-page { width: 220px; padding-left: 10px; }
.st-words { width: 319px; padding-left: 8px; }
.st-style { width: 236px; padding-left: 8px; }
.st-lang { width: 230px; justify-content: center; }
.st-a { width: 68px; }
.st-ins { width: 29px; padding-left: 5px; }
.st-save { width: 30px; justify-content: center; }
.st-b { width: 29px; }
.st-c { width: 173px; }
.st-views { width: 76px; gap: 4px; padding-left: 9px; }
.st-zoom { width: 142px; padding-left: 9px; gap: 6px; }
.z-sign { color: #888; font-size: 13px; }
.z-track { width: 97px; height: 1px; background: #999; position: relative; }
.z-mid { position: absolute; left: 19px; top: -3px; width: 1px; height: 7px; background: #888; }
.z-knob { position: absolute; left: 45px; top: -4px; width: 9px; height: 9px; border: 1px solid #888; border-radius: 50%; background: #f4f5f7; }
.st-pct { border: 0; padding-left: 7px; }

/* Dock */
.dock { height: 65px; flex: none; background: #141414; position: relative; display: flex; align-items: center; }
.d-app { width: 66px; height: 65px; flex: none; display: flex; align-items: center; justify-content: center; position: relative; }
.d-app.on::after { content: ""; position: absolute; left: 50%; bottom: 2px; width: 6px; height: 6px; margin-left: -3px; border-radius: 50%; background: #e95420; }
.d-active { background: #3c3c3c; border-radius: 4px; height: 61px; width: 62px; margin: 0 2px; }
.d-active::after { bottom: 0 !important; }
.fz { font-size: 38px; font-style: italic; fill: #fff; text-anchor: middle; }
```
